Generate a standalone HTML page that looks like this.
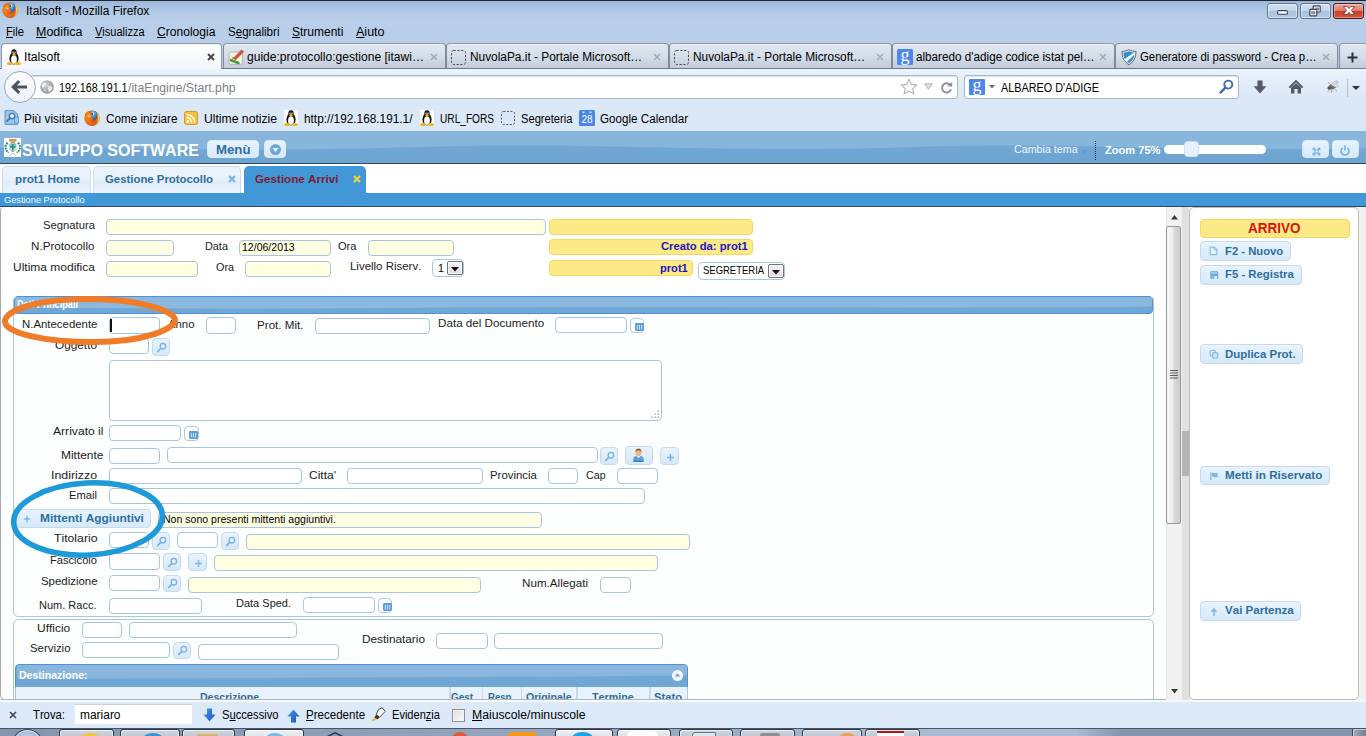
<!DOCTYPE html>
<html lang="it">
<head>
<meta charset="utf-8">
<title>Italsoft - Mozilla Firefox</title>
<style>
*{box-sizing:border-box;margin:0;padding:0}
html,body{width:1366px;height:736px;overflow:hidden;background:#dbe8f7;font-family:"Liberation Sans",sans-serif;font-size:12px;color:#000}
#root{position:relative;width:1366px;height:736px;overflow:hidden}
.t{position:absolute;white-space:nowrap;font-kerning:none;transform-origin:0 0}
.b{position:absolute}
.i{position:absolute;overflow:visible}
u{text-decoration:underline;text-underline-offset:1px}
/* browser chrome */
.titlebar{background:linear-gradient(#9bb6d8 0,#adc5e3 35%,#b7cde8 75%,#b9cfe9 100%);border-top:1px solid #23272d}
.menubar{background:#b9cfe9}
.tabstrip{background:#b9cfe9}
.tab{border:1px solid #7f8a9b;border-top-color:#8d99ac;border-bottom:none;border-radius:4px 4px 0 0;background:linear-gradient(#e1e8f2 0,#d4dde9 50%,#c2ccdb 100%);box-shadow:inset 0 1px 0 #eef2f8}
.tab.act{background:linear-gradient(#ffffff,#f2f6fb);border-color:#8d99ac}
.navbar{background:linear-gradient(#ecf4fd 0,#e6f0fb 18%,#dbe8f7 80%,#dbe8f7 100%)}
.navline{background:#6f7987}
.urlbox{background:#fff;border:1px solid #a9b6c9;border-radius:3px;box-shadow:inset 0 1px 1px #dde3ea}
.backbtn{background:linear-gradient(#fdfeff,#eef2f8);border:1px solid #9ba7b7;border-radius:50%}
.bookmarks{background:#dbe8f7}
.wbtn{border:1px solid #5f7493;border-radius:3px;background:linear-gradient(#d3e1f2 0,#c4d6ec 48%,#a9c0dd 52%,#b4c9e3 100%);box-shadow:inset 0 0 0 1px rgba(255,255,255,.5)}
.wbtn.close{border-color:#4a1c18;background:linear-gradient(#eba898 0,#dc7e6b 48%,#c53f29 52%,#d4573f 100%);box-shadow:inset 0 0 0 1px rgba(255,255,255,.35)}
/* app */
.apphead{background:linear-gradient(#73a8d4 0,#6fa6d3 60%,#6ca4d2 100%)}
.appline{background:#2f4560}
.white{background:#fff}
.atab{border:1px solid #c9ddee;border-bottom:none;border-radius:5px 5px 0 0;background:linear-gradient(#ebf4fc 0,#e7f2fb 45%,#e0edf9 58%,#e9f3fc 100%)}
.atab.act{background:#4297d7;border-color:#4297d7}
.bluebar{background:#4297d7}
.content{background:#fff}
.inp{background:#fff;border:1px solid #a7c6de;border-radius:4px}
.ro{background:#ffffe2}
.hl{background:#fbea85;border:1px solid #f3d663;border-radius:4px}
.panel{border:1px solid #a9c8df;border-radius:5px;background:#fdfefe}
.phead{border:1px solid #4f94d0;border-radius:4px;background:#70a7d4}
.btn{border:1px solid #c5dbec;border-radius:4px;background:linear-gradient(#e8f3fd 0,#dfeefb 50%,#d6e9f9 100%)}
.sel{background:#fff;border:1px solid #a6c9e2;border-radius:4px}
.selbtn{border:1px solid #70747a;border-radius:2px;background:linear-gradient(#f6f6f6,#dcdcdc);box-shadow:inset 0 0 0 1px #fff}
.findbar{background:#dbe9f8;border-top:2px solid #f7fafd}
.taskbar{background:linear-gradient(90deg,#8595ae 0,#8e9eb7 25%,#9aabc3 50%,#a9bbd2 68%,#a9bbd2 78.8%,#8595ae 82%,#8595ae 100%)}

</style>
</head>
<body>
<div id="root">
<!-- window title bar -->
<div class="b titlebar" style="left:0px;top:0px;width:1366px;height:22px;"></div>
<div class="b menubar" style="left:0px;top:22px;width:1366px;height:21px;"></div>
<div class="b tabstrip" style="left:0px;top:43px;width:1366px;height:26px;"></div>
<div class="b navline" style="left:0px;top:68px;width:1366px;height:1px;"></div>
<div class="b navbar" style="left:0px;top:69px;width:1366px;height:35px;"></div>
<div class="b bookmarks" style="left:0px;top:104px;width:1366px;height:27px;"></div>
<svg class="i" style="left:2px;top:2px;" width="16" height="16" viewBox="0 0 16 16"><defs><radialGradient id="ffga" cx="40%" cy="30%" r="75%"><stop offset="0" stop-color="#d9effc"/><stop offset=".35" stop-color="#4f9fe2"/><stop offset="1" stop-color="#1d4f9e"/></radialGradient>
<radialGradient id="ffoa" cx="35%" cy="45%" r="70%"><stop offset="0" stop-color="#f59a22"/><stop offset=".6" stop-color="#e7681a"/><stop offset="1" stop-color="#c24a10"/></radialGradient></defs>
<circle cx="8" cy="8.2" r="7.7" fill="url(#ffoa)"/>
<path d="M11.6 1.6 C14.4 3 16 5.6 15.7 8.6 C15.4 11.6 13.6 14 11 15.2 C13 13.4 14 11 13.8 8.4 C13.7 5.6 12.8 3.4 11.6 1.6Z" fill="#f8cb45"/>
<ellipse cx="9.9" cy="5.4" rx="3.5" ry="4.7" fill="url(#ffga)"/>
<path d="M.9 4.4 C1.6 2.4 3.6 .9 6 .9 C6.6 .9 7 1 7.4 1.2 C6.6 2 6.6 2.9 7.4 3.6 C8.2 3.9 8.6 4.6 8.4 5.5 C7.6 5.8 7.2 6.4 7.2 7.1 C7.9 7.4 8.4 8 8.4 8.8 C9.4 9.8 10.8 10 12 9.4 C11.4 11.2 9.6 12.2 7.6 11.9 C4.6 11.4 2.8 9.2 3 6.8 C1.8 6.4 1 5.6 .9 4.4Z" fill="url(#ffoa)"/>
<path d="M3.4 5.6 C4.6 5.2 6 5.6 6.8 6.6 C5.6 7.2 4.2 7 3.4 5.6Z" fill="#fbd9a0" opacity=".75"/>
<circle cx="8.3" cy="4" r=".8" fill="#1a1a1a"/></svg>
<span class="t" style="left:26.0px;top:4px;font-size:12px;line-height:14px;">Italsoft - Mozilla Firefox</span>
<div class="b wbtn" style="left:1267px;top:3px;width:31px;height:16px;"></div>
<div class="b wbtn" style="left:1300px;top:3px;width:31px;height:16px;"></div>
<div class="b wbtn close" style="left:1333px;top:3px;width:31px;height:16px;"></div>
<svg class="i" style="left:1277px;top:10px;" width="11" height="5" viewBox="0 0 11 5"><rect x=".6" y=".6" width="9.8" height="3.6" fill="#fff" stroke="#3c4656" stroke-width="1.1" rx="1"/></svg>
<svg class="i" style="left:1309px;top:5px;" width="12" height="12" viewBox="0 0 12 12"><rect x="4.2" y=".8" width="7" height="6.2" rx=".8" fill="#fff" stroke="#3c4656" stroke-width="1.2"/><rect x="7" y="3" width="2.4" height="1.8" fill="#c3d2e6" stroke="#3c4656" stroke-width=".7"/><rect x=".8" y="4.4" width="7" height="6.4" rx=".8" fill="#fff" stroke="#3c4656" stroke-width="1.2"/><rect x="2.8" y="6.8" width="3" height="2" fill="#c3d2e6" stroke="#3c4656" stroke-width=".7"/></svg>
<svg class="i" style="left:1343px;top:6px;" width="12" height="9" viewBox="0 0 12 9"><path d="M.4 .6 H4.4 L6 2.6 L7.6 .6 H11.6 L8.3 4.4 L11.6 8.4 H7.6 L6 6.3 L4.4 8.4 H.4 L3.7 4.4 Z" fill="#fff" stroke="#5a211a" stroke-width=".7" stroke-linejoin="round"/></svg>
<span class="t" style="left:6.0px;top:25px;font-size:12px;line-height:14px;transform:scaleX(0.932);"><u>F</u>ile</span>
<span class="t" style="left:36.0px;top:25px;font-size:12px;line-height:14px;transform:scaleX(1.039);"><u>M</u>odifica</span>
<span class="t" style="left:95.0px;top:25px;font-size:12px;line-height:14px;transform:scaleX(0.919);"><u>V</u>isualizza</span>
<span class="t" style="left:157.0px;top:25px;font-size:12px;line-height:14px;transform:scaleX(1.007);"><u>C</u>ronologia</span>
<span class="t" style="left:228.0px;top:25px;font-size:12px;line-height:14px;transform:scaleX(0.964);">S<u>e</u>gnalibri</span>
<span class="t" style="left:292.0px;top:25px;font-size:12px;line-height:14px;"><u>S</u>trumenti</span>
<span class="t" style="left:356.0px;top:25px;font-size:12px;line-height:14px;transform:scaleX(1.042);"><u>A</u>iuto</span>
<div class="b tab act" style="left:1px;top:43px;width:221px;height:26px;"></div>
<svg class="i" style="left:7px;top:49px;" width="14" height="16" viewBox="0 0 14 16"><ellipse cx="7" cy="9.5" rx="4.6" ry="6" fill="#141414"/><ellipse cx="7" cy="3.6" rx="2.7" ry="3.3" fill="#141414"/>
<ellipse cx="7" cy="10.6" rx="2.9" ry="4.3" fill="#fff"/><ellipse cx="7" cy="5.2" rx="1.5" ry="1.2" fill="#f3b51a"/>
<ellipse cx="3" cy="14.6" rx="3" ry="1.5" fill="#f0b41c"/><ellipse cx="11" cy="14.6" rx="3" ry="1.5" fill="#f0b41c"/>
<circle cx="6" cy="3.2" r=".7" fill="#fff"/><circle cx="8" cy="3.2" r=".7" fill="#fff"/></svg>
<span class="t" style="left:24.0px;top:50px;font-size:12px;line-height:14px;transform:scaleX(1.017);">Italsoft</span>
<svg class="i" style="left:206.5px;top:53px;" width="8" height="8" viewBox="0 0 8 8"><path d="M1 1 L7 7 M7 1 L1 7" stroke="#3f444c" stroke-width="1.9" fill="none"/></svg>
<div class="b tab" style="left:223px;top:43px;width:223px;height:25px;"></div>
<svg class="i" style="left:228px;top:49px;" width="16" height="16" viewBox="0 0 16 16"><rect x="1" y="3" width="13.6" height="12.4" rx="2.2" fill="#f4f3ec" stroke="#b7b9ac" stroke-width="1"/>
<path d="M3 11.2 L10.4 14" stroke="#3fa338" stroke-width="2.6" fill="none" stroke-linecap="round"/>
<path d="M4 8.6 L7 9.6" stroke="#6fc05a" stroke-width="1.4" fill="none"/>
<path d="M5.2 9.6 L13.6 1 L15.6 2.8 L7.4 11 L4.6 11.6Z" fill="#e0542a" stroke="#93321a" stroke-width=".6"/>
<path d="M5.2 9.6 L7.4 11 L4.6 11.6Z" fill="#f1d7b4"/></svg>
<span class="t" style="left:247.0px;top:50px;font-size:12px;line-height:14px;transform:scaleX(1.005);">guide:protocollo:gestione [itawi…</span>
<svg class="i" style="left:429.5px;top:53px;" width="8" height="8" viewBox="0 0 8 8"><path d="M1 1 L7 7 M7 1 L1 7" stroke="#a3aab5" stroke-width="1.5" fill="none"/></svg>
<div class="b tab" style="left:446px;top:43px;width:223px;height:25px;"></div>
<svg class="i" style="left:450.5px;top:49.5px;" width="15" height="15" viewBox="0 0 15 15"><rect x=".5" y=".5" width="14" height="14" rx="2" fill="none" stroke="#4a4f57" stroke-width="1" stroke-dasharray="2.2 1.6"/></svg>
<span class="t" style="left:470.0px;top:50px;font-size:12px;line-height:14px;transform:scaleX(0.989);">NuvolaPa.it - Portale Microsoft…</span>
<svg class="i" style="left:652.5px;top:53px;" width="8" height="8" viewBox="0 0 8 8"><path d="M1 1 L7 7 M7 1 L1 7" stroke="#a3aab5" stroke-width="1.5" fill="none"/></svg>
<div class="b tab" style="left:669px;top:43px;width:223px;height:25px;"></div>
<svg class="i" style="left:673.5px;top:49.5px;" width="15" height="15" viewBox="0 0 15 15"><rect x=".5" y=".5" width="14" height="14" rx="2" fill="none" stroke="#4a4f57" stroke-width="1" stroke-dasharray="2.2 1.6"/></svg>
<span class="t" style="left:693.0px;top:50px;font-size:12px;line-height:14px;transform:scaleX(0.989);">NuvolaPa.it - Portale Microsoft…</span>
<svg class="i" style="left:875.5px;top:53px;" width="8" height="8" viewBox="0 0 8 8"><path d="M1 1 L7 7 M7 1 L1 7" stroke="#a3aab5" stroke-width="1.5" fill="none"/></svg>
<div class="b tab" style="left:892px;top:43px;width:223px;height:25px;"></div>
<svg class="i" style="left:897px;top:49px;" width="16" height="16" viewBox="0 0 16 16"><rect width="16" height="16" rx="1.5" fill="#4c87ea"/><text x="8" y="11.6" text-anchor="middle" font-family="Liberation Serif,serif" font-size="18" fill="#fff">g</text></svg>
<span class="t" style="left:916.0px;top:50px;font-size:12px;line-height:14px;transform:scaleX(0.975);">albaredo d'adige codice istat pel…</span>
<svg class="i" style="left:1098.5px;top:53px;" width="8" height="8" viewBox="0 0 8 8"><path d="M1 1 L7 7 M7 1 L1 7" stroke="#a3aab5" stroke-width="1.5" fill="none"/></svg>
<div class="b tab" style="left:1115px;top:43px;width:223px;height:25px;"></div>
<svg class="i" style="left:1121px;top:49px;" width="16" height="16" viewBox="0 0 16 16"><path d="M8 .6 C10 1.8 12.6 2.4 15 2.4 C15 8 13 13 8 15.6 C3 13 1 8 1 2.4 C3.4 2.4 6 1.8 8 .6Z" fill="#e9eef3" stroke="#5c6670" stroke-width="1"/>
<path d="M8 2.2 C9.8 3.1 11.8 3.6 13.6 3.7 C13.5 8 12 11.8 8 14 C4 11.8 2.5 8 2.4 3.7 C4.2 3.6 6.2 3.1 8 2.2Z" fill="#2f8fd6"/>
<path d="M12.8 3.7 L3.2 10.2 C3.8 11.3 4.6 12.3 5.6 13 L13.5 5.6 C13.6 5 13.6 4.3 13.6 3.7Z" fill="#fff"/></svg>
<span class="t" style="left:1139.5px;top:50px;font-size:12px;line-height:14px;transform:scaleX(0.945);">Generatore di password - Crea p…</span>
<svg class="i" style="left:1321.5px;top:53px;" width="8" height="8" viewBox="0 0 8 8"><path d="M1 1 L7 7 M7 1 L1 7" stroke="#a3aab5" stroke-width="1.5" fill="none"/></svg>
<div class="b tab" style="left:1339px;top:43px;width:29px;height:25px;"></div>
<svg class="i" style="left:1346.5px;top:51.5px;" width="11" height="11" viewBox="0 0 11 11"><path d="M5.5 .5 V10.5 M.5 5.5 H10.5" stroke="#2c3038" stroke-width="2" fill="none"/></svg>
<div class="b urlbox" style="left:30px;top:75px;width:928px;height:24px;"></div>
<div class="b backbtn" style="left:4px;top:71px;width:32px;height:32px;"></div>
<svg class="i" style="left:12px;top:80px;" width="16" height="14" viewBox="0 0 16 14"><path d="M7.2 1.2 L1.2 7 L7.2 12.8 M1.6 7 H15" stroke="#4c545f" stroke-width="3" fill="none" stroke-linejoin="miter"/></svg>
<svg class="i" style="left:40px;top:80px;" width="14" height="14" viewBox="0 0 14 14"><defs><radialGradient id="glb" cx="40%" cy="35%" r="70%"><stop offset="0" stop-color="#d5d5d5"/><stop offset="1" stop-color="#8f8f8f"/></radialGradient></defs>
<circle cx="7" cy="7" r="6.8" fill="url(#glb)"/><path d="M3 3 C5 2 6.5 3 6 5 C5.5 7 3.5 6.6 2.4 7.8 C1.6 6 2 4 3 3Z M8.5 6.5 C10 5.6 12 6.4 12.4 8 C12 10 10.6 11.6 9 12 C8 10.6 7.4 8 8.5 6.5Z M4 9.6 C5 9.4 6 10.4 5.6 11.8 C4.8 11.4 4.2 10.6 4 9.6Z" fill="#ececec"/></svg>
<span class="t" style="left:58.5px;top:81px;font-size:12px;line-height:14px;transform:scaleX(0.893);">192.168.191.1</span>
<span class="t" style="left:127.5px;top:81px;font-size:12px;line-height:14px;color:#7b7f86;transform:scaleX(1.020);">/itaEngine/Start.php</span>
<svg class="i" style="left:900px;top:78px;" width="18" height="17" viewBox="0 0 18 17"><path d="M9 1.2 L11.3 6.3 L16.8 6.9 L12.7 10.6 L13.9 16 L9 13.2 L4.1 16 L5.3 10.6 L1.2 6.9 L6.7 6.3 Z" fill="#fbfbfb" stroke="#b4b8be" stroke-width="1.2" stroke-linejoin="round"/></svg>
<svg class="i" style="left:924px;top:83px;" width="9" height="7" viewBox="0 0 9 7"><path d="M.6 .8 H8.4 L4.5 6.4 Z" fill="#dcdfe3" stroke="#a9adb3" stroke-width=".9"/></svg>
<svg class="i" style="left:939.5px;top:80.5px;" width="13" height="13" viewBox="0 0 13 13"><path d="M10.4 4.2 A4.6 4.6 0 1 0 11 8.4" stroke="#8b9199" stroke-width="1.9" fill="none"/><path d="M7.4 5.4 H12.2 V.8 Z" fill="#8b9199"/></svg>
<div class="b urlbox" style="left:964px;top:75px;width:275px;height:24px;"></div>
<svg class="i" style="left:969px;top:79px;" width="16" height="16" viewBox="0 0 16 16"><rect width="16" height="16" rx="1" fill="#4c87ea"/><text x="8" y="11.6" text-anchor="middle" font-family="Liberation Serif,serif" font-size="18" fill="#fff">g</text></svg>
<svg class="i" style="left:989px;top:85px;" width="6" height="4" viewBox="0 0 6 4"><path d="M0 0 H6 L3 3.6 Z" fill="#6a6f78"/></svg>
<span class="t" style="left:1001.0px;top:81px;font-size:12px;line-height:14px;transform:scaleX(0.904);">ALBAREO D'ADIGE</span>
<svg class="i" style="left:1219px;top:79px;" width="15" height="15" viewBox="0 0 15 15"><circle cx="9.3" cy="5.6" r="4" fill="none" stroke="#3f6fa8" stroke-width="1.9"/><path d="M6.4 8.6 L1.4 13.6" stroke="#3f6fa8" stroke-width="2.4" stroke-linecap="round"/></svg>
<svg class="i" style="left:1253px;top:80px;" width="14" height="14" viewBox="0 0 14 14"><path d="M4.4 .5 H9.6 V6.2 H13.4 L7 13.4 L.6 6.2 H4.4 Z" fill="#545b66"/></svg>
<svg class="i" style="left:1288px;top:79px;" width="16" height="15" viewBox="0 0 16 15"><path d="M8 .8 L15.4 8 L14 9.3 L8 3.6 L2 9.3 L.6 8 Z" fill="#545b66"/><path d="M3 8.6 L8 4.2 L13 8.6 V14.6 H9.6 V10 H6.4 V14.6 H3 Z" fill="#545b66"/></svg>
<svg class="i" style="left:1324px;top:79px;" width="17" height="15" viewBox="0 0 17 15"><ellipse cx="8.6" cy="7.4" rx="4" ry="2.8" fill="#6b6e73" transform="rotate(-25 8.6 7.4)"/><circle cx="5.2" cy="9" r="1.8" fill="#505256"/><ellipse cx="10.8" cy="4.2" rx="3.8" ry="1.7" fill="#d3d6da" stroke="#aeb1b6" stroke-width=".5" transform="rotate(-30 10.8 4.2)"/><ellipse cx="12" cy="6.8" rx="3" ry="1.3" fill="#dfe1e4" stroke="#b6b9be" stroke-width=".4" transform="rotate(10 12 6.8)"/><path d="M6 10.4 L3.4 13 M8 11 L7.2 13.8 M10.6 10 L13 12.2 M6.4 5.4 L4 3" stroke="#8f9297" stroke-width=".8"/></svg>
<div class="b" style="left:1347px;top:79px;width:1px;height:18px;background:#b4bdcb"></div>
<svg class="i" style="left:1352px;top:86px;" width="8" height="4" viewBox="0 0 8 4"><path d="M0 0 H8 L4 4 Z" fill="#30343a"/></svg>
<svg class="i" style="left:4px;top:110px;" width="15" height="15" viewBox="0 0 15 15"><path d="M1 .6 H9.6 L13.6 4 V14.4 H1 Z" fill="#9cc7ea" stroke="#5d93c4" stroke-width="1"/><rect x="10.5" y="7" width="4" height="6" fill="#9cc7ea" stroke="#5d93c4" stroke-width=".8"/>
<circle cx="8" cy="6" r="2.7" fill="#e6f2fc" stroke="#3f76ad" stroke-width="1.3"/><path d="M6 8 L3 11.2" stroke="#3f76ad" stroke-width="1.7" stroke-linecap="round"/></svg>
<span class="t" style="left:24.0px;top:112px;font-size:12px;line-height:14px;transform:scaleX(0.991);">Più visitati</span>
<svg class="i" style="left:84px;top:110px;" width="16" height="16" viewBox="0 0 16 16"><defs><radialGradient id="ffgb" cx="40%" cy="30%" r="75%"><stop offset="0" stop-color="#d9effc"/><stop offset=".35" stop-color="#4f9fe2"/><stop offset="1" stop-color="#1d4f9e"/></radialGradient>
<radialGradient id="ffob" cx="35%" cy="45%" r="70%"><stop offset="0" stop-color="#f59a22"/><stop offset=".6" stop-color="#e7681a"/><stop offset="1" stop-color="#c24a10"/></radialGradient></defs>
<circle cx="8" cy="8.2" r="7.7" fill="url(#ffob)"/>
<path d="M11.6 1.6 C14.4 3 16 5.6 15.7 8.6 C15.4 11.6 13.6 14 11 15.2 C13 13.4 14 11 13.8 8.4 C13.7 5.6 12.8 3.4 11.6 1.6Z" fill="#f8cb45"/>
<ellipse cx="9.9" cy="5.4" rx="3.5" ry="4.7" fill="url(#ffgb)"/>
<path d="M.9 4.4 C1.6 2.4 3.6 .9 6 .9 C6.6 .9 7 1 7.4 1.2 C6.6 2 6.6 2.9 7.4 3.6 C8.2 3.9 8.6 4.6 8.4 5.5 C7.6 5.8 7.2 6.4 7.2 7.1 C7.9 7.4 8.4 8 8.4 8.8 C9.4 9.8 10.8 10 12 9.4 C11.4 11.2 9.6 12.2 7.6 11.9 C4.6 11.4 2.8 9.2 3 6.8 C1.8 6.4 1 5.6 .9 4.4Z" fill="url(#ffob)"/>
<path d="M3.4 5.6 C4.6 5.2 6 5.6 6.8 6.6 C5.6 7.2 4.2 7 3.4 5.6Z" fill="#fbd9a0" opacity=".75"/>
<circle cx="8.3" cy="4" r=".8" fill="#1a1a1a"/></svg>
<span class="t" style="left:105.5px;top:112px;font-size:12px;line-height:14px;transform:scaleX(0.975);">Come iniziare</span>
<svg class="i" style="left:184px;top:111px;" width="14" height="14" viewBox="0 0 14 14"><rect x=".5" y=".5" width="13" height="13" rx="2" fill="#f4c343" stroke="#d99a1c" stroke-width="1"/>
<circle cx="3.8" cy="10.4" r="1.4" fill="#fff"/><path d="M2.6 6.6 A4.8 4.8 0 0 1 7.4 11.4 M2.6 3.4 A8 8 0 0 1 10.6 11.4" stroke="#fff" stroke-width="1.5" fill="none"/></svg>
<span class="t" style="left:204.0px;top:112px;font-size:12px;line-height:14px;transform:scaleX(1.014);">Ultime notizie</span>
<svg class="i" style="left:284px;top:110px;background:#fff" width="14" height="16" viewBox="0 0 14 16"><ellipse cx="7" cy="9.5" rx="4.6" ry="6" fill="#141414"/><ellipse cx="7" cy="3.6" rx="2.7" ry="3.3" fill="#141414"/>
<ellipse cx="7" cy="10.6" rx="2.9" ry="4.3" fill="#fff"/><ellipse cx="7" cy="5.2" rx="1.5" ry="1.2" fill="#f3b51a"/>
<ellipse cx="3" cy="14.6" rx="3" ry="1.5" fill="#f0b41c"/><ellipse cx="11" cy="14.6" rx="3" ry="1.5" fill="#f0b41c"/>
<circle cx="6" cy="3.2" r=".7" fill="#fff"/><circle cx="8" cy="3.2" r=".7" fill="#fff"/></svg>
<span class="t" style="left:304.0px;top:112px;font-size:12px;line-height:14px;transform:scaleX(0.985);">http://192.168.191.1/</span>
<svg class="i" style="left:420px;top:110px;background:#fff" width="14" height="16" viewBox="0 0 14 16"><ellipse cx="7" cy="9.5" rx="4.6" ry="6" fill="#141414"/><ellipse cx="7" cy="3.6" rx="2.7" ry="3.3" fill="#141414"/>
<ellipse cx="7" cy="10.6" rx="2.9" ry="4.3" fill="#fff"/><ellipse cx="7" cy="5.2" rx="1.5" ry="1.2" fill="#f3b51a"/>
<ellipse cx="3" cy="14.6" rx="3" ry="1.5" fill="#f0b41c"/><ellipse cx="11" cy="14.6" rx="3" ry="1.5" fill="#f0b41c"/>
<circle cx="6" cy="3.2" r=".7" fill="#fff"/><circle cx="8" cy="3.2" r=".7" fill="#fff"/></svg>
<span class="t" style="left:440.0px;top:112px;font-size:12px;line-height:14px;transform:scaleX(0.844);">URL_FORS</span>
<svg class="i" style="left:500.5px;top:111px;" width="14" height="14" viewBox="0 0 15 15"><rect x=".5" y=".5" width="14" height="14" rx="2" fill="none" stroke="#4a4f57" stroke-width="1" stroke-dasharray="2.2 1.6"/></svg>
<span class="t" style="left:521.0px;top:112px;font-size:12px;line-height:14px;transform:scaleX(0.929);">Segreteria</span>
<svg class="i" style="left:579px;top:110px;" width="16" height="16" viewBox="0 0 16 16"><rect width="16" height="16" rx="1.5" fill="#4a86e8"/><rect x="3.5" y="1.5" width="2" height="1.6" fill="#dbe7fb"/><rect x="10.5" y="1.5" width="2" height="1.6" fill="#dbe7fb"/><text x="8" y="13.2" text-anchor="middle" font-family="Liberation Sans,sans-serif" font-size="10" fill="#fff">28</text></svg>
<span class="t" style="left:600.0px;top:112px;font-size:12px;line-height:14px;transform:scaleX(0.970);">Google Calendar</span>
<!-- application header -->
<div class="b apphead" style="left:0px;top:131px;width:1366px;height:32px;"></div>
<svg class="i" style="left:0px;top:131px;" width="1366" height="32" viewBox="0 0 1366 32"><path d="M0 0 H1366 V17.5 C1290 19 1200 18 1120 16 C1020 13.6 960 14.4 900 16.4 C800 19.4 700 17.6 620 15.6 C520 13.4 460 14.6 400 16.6 C300 19.6 200 19 120 17 C80 16 40 16 0 17 Z" fill="#88b5db"/></svg>
<div class="b appline" style="left:0px;top:163px;width:1366px;height:1px;"></div>
<div class="b white" style="left:0px;top:164px;width:1366px;height:29px;"></div>
<svg class="i" style="left:4px;top:138px;" width="17" height="19" viewBox="0 0 17 19"><rect width="17" height="19" fill="#fefefe"/>
<path d="M5 1.2 H12.6 L12 3.6 H5.6 Z" fill="#a67a2c"/><path d="M5.6 2.2 H12 V2.9 H5.6Z" fill="#d6b354"/>
<rect x="6.6" y="3.8" width="4.4" height="1.8" fill="#c59a72"/>
<path d="M5.2 5.4 H12.4 V11 C12.4 12.4 10.6 13.4 8.8 13.8 C7 13.4 5.2 12.4 5.2 11 Z" fill="#7cc3e8"/>
<path d="M5.2 9 H12.4 V11 C12.4 12.4 10.6 13.4 8.8 13.8 C7 13.4 5.2 12.4 5.2 11 Z" fill="#aee6f4"/>
<path d="M8 6 H9.6 V8.2 H11.6 V9.8 H9.6 V12 H8 V9.8 H6 V8.2 H8 Z" fill="#2f8f62"/>
<path d="M7.6 12.6 H10 V13.4 H7.6Z" fill="#c0563a"/>
<path d="M3.6 4.8 C.8 7.4 .8 11.6 4.6 14.8" fill="none" stroke="#2c8a58" stroke-width="2" stroke-dasharray="1.8 .9"/>
<path d="M14 4.8 C16.8 7.4 16.8 11.6 12.8 14.8" fill="none" stroke="#2c8a58" stroke-width="2" stroke-dasharray="1.8 .9"/>
<path d="M5.6 18 L8.7 14.8 L11.8 18" fill="none" stroke="#a9bfa6" stroke-width="1"/></svg>
<span class="t" style="left:22.0px;top:142px;font-size:16px;line-height:17px;font-weight:bold;color:#fff;">SVILUPPO SOFTWARE</span>
<div class="b btn" style="left:207px;top:140px;width:52px;height:18px;border-color:#dcebf8;border-radius:4px"></div>
<span class="t" style="left:216.0px;top:143px;font-size:12.2px;line-height:14px;font-weight:bold;color:#2e6e9e;transform:scaleX(1.083);">Menù</span>
<div class="b btn" style="left:264px;top:140px;width:22px;height:18px;border-color:#dcebf8;border-radius:4px"></div>
<svg class="i" style="left:270px;top:143.5px;" width="11" height="11" viewBox="0 0 11 11"><circle cx="5.5" cy="5.5" r="5.5" fill="#6aa9de"/><path d="M2.6 4 H8.4 L5.5 8 Z" fill="#fff"/></svg>
<span class="t" style="left:1014.0px;top:143px;font-size:10.8px;line-height:12px;color:#f1f7fd;transform:scaleX(0.991);">Cambia tema</span>
<svg class="i" style="left:1081px;top:150px;" width="7" height="5" viewBox="0 0 7 5"><path d="M0 0 H7 L3.5 4.4 Z" fill="#5c9fe0"/></svg>
<div class="b" style="left:1095px;top:141px;width:1px;height:19px;border-left:1px dotted #27384c"></div>
<span class="t" style="left:1105.3px;top:144px;font-size:11.4px;line-height:12px;font-weight:bold;color:#fff;transform:scaleX(0.974);">Zoom 75%</span>
<div class="b" style="left:1164px;top:145px;width:102px;height:9px;background:#fdfeff;border-radius:4.5px"></div>
<div class="b" style="left:1184px;top:141px;width:15px;height:16px;background:#e6f1fc;border:1px solid #cfe2f4;border-radius:4px"></div>
<div class="b btn" style="left:1302px;top:140px;width:27px;height:18px;border-color:#dcebf8"></div>
<div class="b btn" style="left:1332px;top:140px;width:27px;height:18px;border-color:#dcebf8"></div>
<svg class="i" style="left:1311.5px;top:146.5px;" width="9" height="9" viewBox="0 0 9 9"><path d="M.6 .6 H3.2 V3.2 H.6Z M5.8 .6 H8.4 V3.2 H5.8Z M.6 5.8 H3.2 V8.4 H.6Z M5.8 5.8 H8.4 V8.4 H5.8Z M2.2 2.2 H6.8 V6.8 H2.2Z" fill="#7db6e6"/><rect x="3.4" y="3.4" width="2.2" height="2.2" fill="#e4f0fb"/></svg>
<svg class="i" style="left:1340px;top:144.5px;" width="10" height="11" viewBox="0 0 10 11"><path d="M2.6 2.8 A4 4 0 1 0 7.4 2.8" fill="none" stroke="#74b0e2" stroke-width="1.6"/><path d="M5 .6 V5.4" stroke="#74b0e2" stroke-width="1.6"/></svg>
<div class="b atab" style="left:2px;top:166px;width:89px;height:27px;"></div>
<div class="b atab" style="left:93px;top:166px;width:148px;height:27px;"></div>
<div class="b atab act" style="left:244px;top:166px;width:122px;height:27px;"></div>
<span class="t" style="left:14.5px;top:173px;font-size:10.5px;line-height:12px;font-weight:bold;color:#2e6e9e;transform:scaleX(1.113);">prot1 Home</span>
<span class="t" style="left:105.0px;top:173px;font-size:10.5px;line-height:12px;font-weight:bold;color:#2e6e9e;transform:scaleX(1.083);">Gestione Protocollo</span>
<span class="t" style="left:255.0px;top:173px;font-size:10.5px;line-height:12px;font-weight:bold;color:#7d1c30;transform:scaleX(1.109);">Gestione Arrivi</span>
<svg class="i" style="left:228px;top:175px;" width="8" height="8" viewBox="0 0 8 8"><path d="M1 1 L7 7 M7 1 L1 7" stroke="#7fb5e3" stroke-width="2.3" fill="none"/></svg>
<svg class="i" style="left:352.5px;top:175px;" width="8" height="8" viewBox="0 0 8 8"><path d="M1 1 L7 7 M7 1 L1 7" stroke="#f0d23a" stroke-width="2.3" fill="none"/></svg>
<div class="b bluebar" style="left:0px;top:193px;width:1366px;height:13px;"></div>
<div class="b appline" style="left:0px;top:206px;width:1366px;height:1px;"></div>
<span class="t" style="left:4.0px;top:194px;font-size:9.4px;line-height:11px;color:#f4fdff;transform:scaleX(0.987);">Gestione Protocollo</span>
<div class="b" style="left:0px;top:207px;width:1366px;height:493px;background:#f0f0f0"></div>
<div class="b content" style="left:0px;top:207px;width:1166px;height:493px;border-left:1px solid #ababab;border-bottom:1px solid #b9b9b9;border-radius:4px 0 0 5px"></div>
<!-- form -->
<span class="t" style="left:42.5px;top:219px;font-size:11px;line-height:12px;color:#1c1c1c;transform:scaleX(1.023);">Segnatura</span>
<div class="b inp ro" style="left:106px;top:219px;width:440px;height:16px;"></div>
<div class="b hl" style="left:549px;top:219px;width:204px;height:16px;"></div>
<span class="t" style="left:31.0px;top:240px;font-size:11px;line-height:12px;color:#1c1c1c;transform:scaleX(1.059);">N.Protocollo</span>
<div class="b inp ro" style="left:106px;top:240px;width:68px;height:16px;"></div>
<span class="t" style="left:204.5px;top:240px;font-size:11px;line-height:12px;color:#1c1c1c;transform:scaleX(0.986);">Data</span>
<div class="b inp ro" style="left:239px;top:240px;width:92px;height:16px;"></div>
<span class="t" style="left:242.2px;top:241px;font-size:10.67px;line-height:12px;transform:scaleX(0.988);">12/06/2013</span>
<span class="t" style="left:338.0px;top:240px;font-size:11px;line-height:12px;color:#1c1c1c;transform:scaleX(1.007);">Ora</span>
<div class="b inp ro" style="left:368px;top:240px;width:86px;height:16px;"></div>
<div class="b hl" style="left:549px;top:239px;width:204px;height:16px;"></div>
<span class="t" style="left:661.3px;top:240px;font-size:11px;line-height:12px;font-weight:bold;color:#2415c6;transform:scaleX(1.021);">Creato da: prot1</span>
<span class="t" style="left:12.5px;top:261px;font-size:11px;line-height:12px;color:#1c1c1c;transform:scaleX(1.090);">Ultima modifica</span>
<div class="b inp ro" style="left:106px;top:261px;width:92px;height:16px;"></div>
<span class="t" style="left:215.5px;top:261px;font-size:11px;line-height:12px;color:#1c1c1c;transform:scaleX(0.980);">Ora</span>
<div class="b inp ro" style="left:245px;top:261px;width:86px;height:16px;"></div>
<span class="t" style="left:349.5px;top:260px;font-size:11px;line-height:12px;color:#1c1c1c;transform:scaleX(1.042);">Livello Riserv.</span>
<div class="b sel" style="left:432px;top:259px;width:32px;height:18px;"></div>
<span class="t" style="left:438.0px;top:262px;font-size:10.67px;line-height:12px;">1</span>
<div class="b selbtn" style="left:447px;top:261px;width:16px;height:14px;"></div>
<svg class="i" style="left:451px;top:266.5px;" width="8" height="5" viewBox="0 0 8 5"><path d="M0 0 H8 L4 4.6 Z" fill="#111"/></svg>
<div class="b hl" style="left:549px;top:260px;width:144px;height:16px;"></div>
<span class="t" style="left:660.4px;top:262px;font-size:11px;line-height:12px;font-weight:bold;color:#2415c6;transform:scaleX(1.011);">prot1</span>
<div class="b sel" style="left:698px;top:262px;width:87px;height:18px;"></div>
<span class="t" style="left:703.0px;top:264px;font-size:10.6px;line-height:12px;transform:scaleX(0.895);">SEGRETERIA</span>
<div class="b selbtn" style="left:768px;top:264px;width:16px;height:14px;"></div>
<svg class="i" style="left:772px;top:269.5px;" width="8" height="5" viewBox="0 0 8 5"><path d="M0 0 H8 L4 4.6 Z" fill="#111"/></svg>
<div class="b panel" style="left:13px;top:296px;width:1141px;height:321px;"></div>
<div class="b phead" style="left:14px;top:296px;width:1139px;height:18px;"></div>
<svg class="i" style="left:15px;top:297px;" width="1137" height="16" viewBox="0 0 1137 16"><path d="M0 0 H1137 V9.5 C900 12.5 700 8.5 450 10.5 C300 11.6 150 12 0 10.5 Z" fill="#8ab8df"/></svg>
<span class="t" style="left:17.0px;top:299px;font-size:10px;line-height:11px;font-weight:bold;color:#fff;transform:scaleX(0.915);">Dati Principali</span>
<span class="t" style="left:21.5px;top:318px;font-size:11px;line-height:12px;color:#1c1c1c;transform:scaleX(1.037);">N.Antecedente</span>
<div class="b inp" style="left:109px;top:317px;width:51px;height:17px;"></div>
<div class="b" style="left:110px;top:319px;width:2px;height:13px;background:#111"></div>
<span class="t" style="left:168.0px;top:318px;font-size:11px;line-height:12px;color:#1c1c1c;transform:scaleX(1.030);">Anno</span>
<div class="b inp" style="left:206px;top:317px;width:30px;height:17px;"></div>
<span class="t" style="left:257.0px;top:319px;font-size:11px;line-height:12px;color:#1c1c1c;transform:scaleX(1.057);">Prot. Mit.</span>
<div class="b inp" style="left:315px;top:318px;width:115px;height:16px;"></div>
<span class="t" style="left:437.5px;top:317px;font-size:11px;line-height:12px;color:#1c1c1c;transform:scaleX(1.059);">Data del Documento</span>
<div class="b inp" style="left:555px;top:317px;width:72px;height:16px;"></div>
<div class="b inp" style="left:630px;top:318px;width:14px;height:15px;border-color:#b9c6d6;border-radius:4px"></div>
<svg class="i" style="left:634.6px;top:323px;" width="9" height="8" viewBox="0 0 9 8"><rect x="0" y="0" width="9" height="8" rx="1.2" fill="#5a9edb"/><path d="M2.3 2 V6.4 M4.5 2 V6.4 M6.7 2 V6.4" stroke="#cfe6fa" stroke-width="1"/></svg>
<span class="t" style="left:55.0px;top:339px;font-size:11px;line-height:12px;color:#1c1c1c;transform:scaleX(1.073);">Oggetto</span>
<div class="b inp" style="left:109px;top:338px;width:40px;height:16px;"></div>
<div class="b btn" style="left:152px;top:338px;width:18px;height:18px;"></div>
<svg class="i" style="left:155.5px;top:341.5px;" width="11" height="11" viewBox="0 0 11 11"><circle cx="6.9" cy="4.2" r="2.7" fill="#f1f7fd" stroke="#7db6e6" stroke-width="1.5"/><path d="M4.8 6.4 L1.8 9.4" stroke="#7db6e6" stroke-width="1.9" stroke-linecap="round"/></svg>
<div class="b inp" style="left:109px;top:360px;width:553px;height:61px;"></div>
<svg class="i" style="left:651px;top:410px;" width="9" height="9" viewBox="0 0 9 9"><g fill="#b7b7b7"><rect x="6.4" y=".4" width="1.6" height="1.6"/><rect x="3.4" y="3.4" width="1.6" height="1.6"/><rect x="6.4" y="3.4" width="1.6" height="1.6"/><rect x=".4" y="6.4" width="1.6" height="1.6"/><rect x="3.4" y="6.4" width="1.6" height="1.6"/><rect x="6.4" y="6.4" width="1.6" height="1.6"/></g></svg>
<span class="t" style="left:53.0px;top:425px;font-size:11px;line-height:12px;color:#1c1c1c;transform:scaleX(1.101);">Arrivato il</span>
<div class="b inp" style="left:109px;top:425px;width:72px;height:16px;"></div>
<div class="b inp" style="left:184px;top:426px;width:15px;height:15px;border-color:#b9c6d6;border-radius:4px"></div>
<svg class="i" style="left:189.1px;top:431px;" width="9" height="8" viewBox="0 0 9 8"><rect x="0" y="0" width="9" height="8" rx="1.2" fill="#5a9edb"/><path d="M2.3 2 V6.4 M4.5 2 V6.4 M6.7 2 V6.4" stroke="#cfe6fa" stroke-width="1"/></svg>
<span class="t" style="left:61.0px;top:449px;font-size:11px;line-height:12px;color:#1c1c1c;transform:scaleX(1.085);">Mittente</span>
<div class="b inp" style="left:109px;top:448px;width:51px;height:16px;"></div>
<div class="b inp" style="left:167px;top:447px;width:431px;height:16px;"></div>
<div class="b btn" style="left:600px;top:447px;width:18px;height:18px;"></div>
<svg class="i" style="left:603.5px;top:450.5px;" width="11" height="11" viewBox="0 0 11 11"><circle cx="6.9" cy="4.2" r="2.7" fill="#f1f7fd" stroke="#7db6e6" stroke-width="1.5"/><path d="M4.8 6.4 L1.8 9.4" stroke="#7db6e6" stroke-width="1.9" stroke-linecap="round"/></svg>
<div class="b btn" style="left:625px;top:446px;width:28px;height:19px;"></div>
<svg class="i" style="left:631.5px;top:447.5px;" width="13" height="15" viewBox="0 0 13 15"><ellipse cx="6.5" cy="4.6" rx="3" ry="3.6" fill="#e9b98a"/><path d="M3.4 4.2 C3.2 1.6 4.8 .4 6.5 .4 C8.2 .4 9.8 1.6 9.6 4.2 C8.8 3 7.6 2.6 6.5 2.6 C5.4 2.6 4.2 3 3.4 4.2Z" fill="#9a5a1e"/>
<path d="M1.4 14 V10.6 C1.4 9 3 8.2 4.6 8 L6.5 9.8 L8.4 8 C10 8.2 11.6 9 11.6 10.6 V14 Z" fill="#5f9fdc"/><path d="M4.6 8 L6.5 9.8 L8.4 8 L6.5 8.6Z" fill="#fff"/><path d="M1.4 12.6 H11.6 V14 H1.4Z" fill="#3d7fc2"/></svg>
<div class="b btn" style="left:660px;top:447px;width:19px;height:18px;"></div>
<svg class="i" style="left:665.5px;top:453.2px;" width="9" height="9" viewBox="0 0 9 9"><path d="M4.5 1 V8 M1 4.5 H8" stroke="#7db6e6" stroke-width="1.5" fill="none"/></svg>
<span class="t" style="left:51.0px;top:469px;font-size:11px;line-height:12px;color:#1c1c1c;transform:scaleX(1.124);">Indirizzo</span>
<div class="b inp" style="left:109px;top:468px;width:193px;height:16px;"></div>
<span class="t" style="left:309.0px;top:469px;font-size:11px;line-height:12px;color:#1c1c1c;transform:scaleX(1.091);">Citta'</span>
<div class="b inp" style="left:347px;top:468px;width:136px;height:16px;"></div>
<span class="t" style="left:490.0px;top:469px;font-size:11px;line-height:12px;color:#1c1c1c;transform:scaleX(1.037);">Provincia</span>
<div class="b inp" style="left:548px;top:468px;width:30px;height:16px;"></div>
<span class="t" style="left:585.5px;top:469px;font-size:11px;line-height:12px;color:#1c1c1c;transform:scaleX(0.969);">Cap</span>
<div class="b inp" style="left:617px;top:468px;width:41px;height:16px;"></div>
<span class="t" style="left:69.0px;top:489px;font-size:11px;line-height:12px;color:#1c1c1c;transform:scaleX(1.018);">Email</span>
<div class="b inp" style="left:109px;top:488px;width:536px;height:16px;"></div>
<div class="b btn" style="left:16px;top:509px;width:135px;height:19px;"></div>
<svg class="i" style="left:23px;top:514.5px;" width="8" height="8" viewBox="0 0 8 8"><path d="M4 .8 V7.2 M.8 4 H7.2" stroke="#7db6e6" stroke-width="1.4" fill="none"/></svg>
<span class="t" style="left:39.5px;top:512px;font-size:11.2px;line-height:12px;font-weight:bold;color:#2e6e9e;transform:scaleX(1.065);">Mittenti Aggiuntivi</span>
<div class="b inp ro" style="left:158px;top:512px;width:384px;height:16px;"></div>
<span class="t" style="left:163.0px;top:513px;font-size:10.67px;line-height:12px;transform:scaleX(0.989);">Non sono presenti mittenti aggiuntivi.</span>
<span class="t" style="left:54.0px;top:532px;font-size:11px;line-height:12px;color:#1c1c1c;transform:scaleX(1.111);">Titolario</span>
<div class="b inp" style="left:109px;top:532px;width:40px;height:16px;"></div>
<div class="b btn" style="left:152px;top:532px;width:18px;height:18px;"></div>
<svg class="i" style="left:155.5px;top:535.5px;" width="11" height="11" viewBox="0 0 11 11"><circle cx="6.9" cy="4.2" r="2.7" fill="#f1f7fd" stroke="#7db6e6" stroke-width="1.5"/><path d="M4.8 6.4 L1.8 9.4" stroke="#7db6e6" stroke-width="1.9" stroke-linecap="round"/></svg>
<div class="b inp" style="left:177px;top:532px;width:41px;height:16px;"></div>
<div class="b btn" style="left:221px;top:532px;width:18px;height:18px;"></div>
<svg class="i" style="left:224.5px;top:535.5px;" width="11" height="11" viewBox="0 0 11 11"><circle cx="6.9" cy="4.2" r="2.7" fill="#f1f7fd" stroke="#7db6e6" stroke-width="1.5"/><path d="M4.8 6.4 L1.8 9.4" stroke="#7db6e6" stroke-width="1.9" stroke-linecap="round"/></svg>
<div class="b inp ro" style="left:246px;top:534px;width:444px;height:16px;"></div>
<span class="t" style="left:50.0px;top:554px;font-size:11px;line-height:12px;color:#1c1c1c;transform:scaleX(1.012);">Fascicolo</span>
<div class="b inp" style="left:109px;top:553px;width:51px;height:17px;"></div>
<div class="b btn" style="left:163px;top:553px;width:18px;height:18px;"></div>
<svg class="i" style="left:166.5px;top:556.5px;" width="11" height="11" viewBox="0 0 11 11"><circle cx="6.9" cy="4.2" r="2.7" fill="#f1f7fd" stroke="#7db6e6" stroke-width="1.5"/><path d="M4.8 6.4 L1.8 9.4" stroke="#7db6e6" stroke-width="1.9" stroke-linecap="round"/></svg>
<div class="b btn" style="left:188px;top:553px;width:19px;height:18px;"></div>
<svg class="i" style="left:193.5px;top:558.95px;" width="9" height="9" viewBox="0 0 9 9"><path d="M4.5 1 V8 M1 4.5 H8" stroke="#7db6e6" stroke-width="1.5" fill="none"/></svg>
<div class="b inp ro" style="left:214px;top:555px;width:444px;height:16px;"></div>
<span class="t" style="left:40.5px;top:575px;font-size:11px;line-height:12px;color:#1c1c1c;transform:scaleX(1.038);">Spedizione</span>
<div class="b inp" style="left:109px;top:575px;width:51px;height:16px;"></div>
<div class="b btn" style="left:163px;top:575px;width:18px;height:17px;"></div>
<svg class="i" style="left:166.5px;top:578px;" width="11" height="11" viewBox="0 0 11 11"><circle cx="6.9" cy="4.2" r="2.7" fill="#f1f7fd" stroke="#7db6e6" stroke-width="1.5"/><path d="M4.8 6.4 L1.8 9.4" stroke="#7db6e6" stroke-width="1.9" stroke-linecap="round"/></svg>
<div class="b inp ro" style="left:188px;top:577px;width:293px;height:16px;"></div>
<span class="t" style="left:522.0px;top:577px;font-size:11px;line-height:12px;color:#1c1c1c;transform:scaleX(1.058);">Num.Allegati</span>
<div class="b inp" style="left:600px;top:577px;width:31px;height:16px;"></div>
<span class="t" style="left:39.0px;top:599px;font-size:11px;line-height:12px;color:#1c1c1c;">Num. Racc.</span>
<div class="b inp" style="left:109px;top:598px;width:93px;height:16px;"></div>
<span class="t" style="left:236.0px;top:597px;font-size:11px;line-height:12px;color:#1c1c1c;">Data Sped.</span>
<div class="b inp" style="left:303px;top:597px;width:72px;height:16px;"></div>
<div class="b inp" style="left:378px;top:598px;width:14px;height:15px;border-color:#b9c6d6;border-radius:4px"></div>
<svg class="i" style="left:382.6px;top:603px;" width="9" height="8" viewBox="0 0 9 8"><rect x="0" y="0" width="9" height="8" rx="1.2" fill="#5a9edb"/><path d="M2.3 2 V6.4 M4.5 2 V6.4 M6.7 2 V6.4" stroke="#cfe6fa" stroke-width="1"/></svg>
<div class="b panel" style="left:13px;top:619px;width:1141px;height:101px;"></div>
<span class="t" style="left:37.0px;top:622px;font-size:11px;line-height:12px;color:#1c1c1c;transform:scaleX(1.087);">Ufficio</span>
<div class="b inp" style="left:82px;top:622px;width:40px;height:16px;"></div>
<div class="b inp" style="left:129px;top:622px;width:168px;height:16px;"></div>
<span class="t" style="left:29.5px;top:642px;font-size:11px;line-height:12px;color:#1c1c1c;transform:scaleX(1.034);">Servizio</span>
<div class="b inp" style="left:82px;top:642px;width:88px;height:16px;"></div>
<div class="b btn" style="left:173px;top:642px;width:18px;height:17px;"></div>
<svg class="i" style="left:176.5px;top:645px;" width="11" height="11" viewBox="0 0 11 11"><circle cx="6.9" cy="4.2" r="2.7" fill="#f1f7fd" stroke="#7db6e6" stroke-width="1.5"/><path d="M4.8 6.4 L1.8 9.4" stroke="#7db6e6" stroke-width="1.9" stroke-linecap="round"/></svg>
<div class="b inp" style="left:198px;top:644px;width:141px;height:16px;"></div>
<span class="t" style="left:362.0px;top:633px;font-size:11px;line-height:12px;color:#1c1c1c;transform:scaleX(1.073);">Destinatario</span>
<div class="b inp" style="left:436px;top:633px;width:52px;height:16px;"></div>
<div class="b inp" style="left:494px;top:633px;width:169px;height:16px;"></div>
<div class="b phead" style="left:15px;top:664px;width:673px;height:24px;border-radius:4px 4px 0 0"></div>
<svg class="i" style="left:16.5px;top:665px;" width="670" height="21" viewBox="0 0 670 21"><path d="M0 0 H670 V10.5 C520 12 300 13 0 13.5 Z" fill="#89b6dc"/></svg>
<span class="t" style="left:19.0px;top:669px;font-size:11px;line-height:12px;font-weight:bold;color:#fff;transform:scaleX(0.958);">Destinazione:</span>
<svg class="i" style="left:672px;top:670px;" width="11" height="11" viewBox="0 0 11 11"><circle cx="5.5" cy="5.5" r="5.5" fill="#f5f9fd"/><path d="M2.6 6.4 L5.5 3.2 L8.4 6.4 Z" fill="#6aa6da"/><path d="M3.2 8 H7.8" stroke="#dbe9f6" stroke-width="1"/></svg>
<div class="b" style="left:15px;top:687px;width:673px;height:12px;background:#e7f2fc;border-left:1px solid #a6c9e2;border-right:1px solid #a6c9e2"></div>
<div class="b" style="left:449px;top:687px;width:2px;height:12px;background:#c5dbec"></div>
<div class="b" style="left:482px;top:687px;width:1px;height:12px;background:#c5dbec"></div>
<div class="b" style="left:521px;top:687px;width:1px;height:12px;background:#c5dbec"></div>
<div class="b" style="left:576px;top:687px;width:2px;height:12px;background:#c5dbec"></div>
<div class="b" style="left:649px;top:687px;width:2px;height:12px;background:#c5dbec"></div>
<span class="t" style="left:199.5px;top:691px;font-size:11px;line-height:12px;font-weight:bold;color:#2e6e9e;transform:scaleX(0.956);">Descrizione</span>
<span class="t" style="left:450.5px;top:691px;font-size:11px;line-height:12px;font-weight:bold;color:#2e6e9e;transform:scaleX(0.901);">Gest</span>
<span class="t" style="left:488.0px;top:691px;font-size:11px;line-height:12px;font-weight:bold;color:#2e6e9e;transform:scaleX(0.872);">Resp</span>
<span class="t" style="left:525.5px;top:691px;font-size:11px;line-height:12px;font-weight:bold;color:#2e6e9e;transform:scaleX(0.955);">Originale</span>
<span class="t" style="left:591.5px;top:691px;font-size:11px;line-height:12px;font-weight:bold;color:#2e6e9e;transform:scaleX(0.976);">Termine</span>
<span class="t" style="left:654.0px;top:691px;font-size:11px;line-height:12px;font-weight:bold;color:#2e6e9e;transform:scaleX(1.018);">Stato</span>
<div class="b" style="left:1px;top:699px;width:1165px;height:1px;background:#b4b4b4"></div>
<svg class="i" style="left:0px;top:0px;" width="200" height="400" viewBox="0 0 200 400"><path d="M5 321.5 C5 308.9 41.5 299 88 299 C142 299 175 311.6 175 320 C175 328.8 144 342 94 342 C44 342 5 333 5 321.5 Z" fill="none" stroke="#f07c28" stroke-width="6" stroke-linejoin="round"/></svg>
<svg class="i" style="left:0px;top:470px;" width="200" height="100" viewBox="0 0 200 100"><ellipse cx="88" cy="49" rx="74.4" ry="36" fill="none" stroke="#1e9ad8" stroke-width="5.6" transform="rotate(-3 88 49)"/></svg>
<!-- scrollbar, splitter, right action panel -->
<div class="b" style="left:1166px;top:207px;width:17px;height:493px;background:#f1f1f1;border-left:1px solid #e6e6e6;border-right:1px solid #d9d9d9"></div>
<svg class="i" style="left:1171px;top:215px;" width="7" height="4.5" viewBox="0 0 7 4.5"><path d="M0 4.5 H7 L3.5 0 Z" fill="#3a3a3a"/></svg>
<div class="b" style="left:1166px;top:226px;width:15px;height:298px;border:1px solid #979797;border-radius:2px;background:linear-gradient(90deg,#f7f7f7 0,#ececec 45%,#d9d9d9 55%,#cdcdd0 100%)"></div>
<svg class="i" style="left:1170px;top:370px;" width="8" height="8" viewBox="0 0 8 8"><path d="M0 .5 H8 M0 3 H8 M0 5.5 H8 M0 8 H8" stroke="#5a5a5a" stroke-width="1"/></svg>
<svg class="i" style="left:1171px;top:689px;" width="7" height="4.5" viewBox="0 0 7 4.5"><path d="M0 0 H7 L3.5 4.5 Z" fill="#3a3a3a"/></svg>
<div class="b" style="left:1182px;top:207px;width:7px;height:493px;background:#e1e1e1"></div>
<div class="b" style="left:1182px;top:431px;width:7px;height:45px;background:#b4b4b4"></div>
<div class="b" style="left:1189px;top:207px;width:170px;height:493px;background:#fff;border:1px solid #bdbdbd;border-radius:5px"></div>
<div class="b" style="left:1359px;top:207px;width:7px;height:493px;background:#f0f0f0"></div>
<div class="b hl" style="left:1200px;top:219px;width:150px;height:19px;"></div>
<span class="t" style="left:1248.0px;top:220px;font-size:14.6px;line-height:16px;font-weight:bold;color:#d6150d;transform:scaleX(0.924);">ARRIVO</span>
<div class="b btn" style="left:1200px;top:241px;width:91px;height:20px;"></div>
<svg class="i" style="left:1208.5px;top:246.15px;" width="10" height="10" viewBox="0 0 10 10"><path d="M1.2 1.2 H5.4 L7.8 3.4 V8.6 H1.2 Z" fill="#e9f3fc" stroke="#8cbce6" stroke-width="1.2" stroke-linejoin="round"/><path d="M5 1.4 V3.8 H7.6" fill="none" stroke="#8cbce6" stroke-width="1"/></svg>
<span class="t" style="left:1224.7px;top:245px;font-size:11px;line-height:12px;font-weight:bold;color:#2e6e9e;transform:scaleX(1.025);">F2 - Nuovo</span>
<div class="b btn" style="left:1200px;top:265px;width:102px;height:20px;"></div>
<svg class="i" style="left:1208.5px;top:270.15px;" width="10" height="10" viewBox="0 0 10 10"><rect x="1.2" y="1.2" width="8" height="7.8" rx="1.2" fill="#6aa8e0"/><rect x="2.2" y="2.2" width="6" height="1.6" fill="#a9cff0"/><rect x="5.4" y="6" width="2.6" height="3" fill="#e4f0fb"/><rect x="2.4" y="6" width="2.2" height="3" fill="#8dbfea"/></svg>
<span class="t" style="left:1224.7px;top:268px;font-size:11px;line-height:12px;font-weight:bold;color:#2e6e9e;transform:scaleX(1.032);">F5 - Registra</span>
<div class="b btn" style="left:1200px;top:344px;width:103px;height:20px;"></div>
<svg class="i" style="left:1208.5px;top:349.4px;" width="10" height="10" viewBox="0 0 10 10"><rect x="1.2" y="1.2" width="5" height="5.6" rx="1.2" fill="#e9f3fc" stroke="#7db6e6" stroke-width="1.1"/><rect x="3.6" y="3.6" width="5.2" height="5.6" rx="1.2" fill="#cfe4f8" stroke="#7db6e6" stroke-width="1.1"/></svg>
<span class="t" style="left:1224.7px;top:348px;font-size:11px;line-height:12px;font-weight:bold;color:#2e6e9e;transform:scaleX(1.040);">Duplica Prot.</span>
<div class="b btn" style="left:1200px;top:466px;width:130px;height:19px;"></div>
<svg class="i" style="left:1208.5px;top:470.85px;" width="10" height="10" viewBox="0 0 10 10"><path d="M1.8 1.6 V9" stroke="#7db6e6" stroke-width="1.2"/><path d="M3 1.8 C4.4 1.2 5.8 2.8 8.6 1.8 V6 C5.8 7 4.4 5.4 3 6 Z" fill="#7db6e6"/></svg>
<span class="t" style="left:1224.7px;top:469px;font-size:11px;line-height:12px;font-weight:bold;color:#2e6e9e;transform:scaleX(1.062);">Metti in Riservato</span>
<div class="b btn" style="left:1200px;top:601px;width:101px;height:20px;"></div>
<svg class="i" style="left:1208.5px;top:606.55px;" width="10" height="10" viewBox="0 0 10 10"><path d="M5 9 V2.8 M2.6 4.9 L5 2 L7.4 4.9" stroke="#7db6e6" stroke-width="1.5" fill="none"/></svg>
<span class="t" style="left:1224.7px;top:604px;font-size:11px;line-height:12px;font-weight:bold;color:#2e6e9e;transform:scaleX(1.051);">Vai Partenza</span>
<!-- find bar -->
<div class="b findbar" style="left:0px;top:700px;width:1366px;height:28px;"></div>
<svg class="i" style="left:8.5px;top:711px;" width="8" height="8" viewBox="0 0 8 8"><path d="M1 1 L7 7 M7 1 L1 7" stroke="#444a52" stroke-width="1.7" fill="none"/></svg>
<span class="t" style="left:33.0px;top:708px;font-size:12px;line-height:14px;transform:scaleX(0.938);">Trova:</span>
<div class="b" style="left:74px;top:704px;width:119px;height:21px;background:#fff;border:1px solid #e3e9f1;border-top-color:#c9d2de"></div>
<span class="t" style="left:79.5px;top:708px;font-size:12px;line-height:14px;transform:scaleX(0.996);">mariaro</span>
<svg class="i" style="left:203px;top:708px;" width="13" height="14" viewBox="0 0 13 14"><defs><linearGradient id="fa1" x1="0" y1="0" x2="1" y2="1"><stop offset="0" stop-color="#4a97ec"/><stop offset="1" stop-color="#174fbb"/></linearGradient></defs><path d="M4 .5 H9 V6.4 H12.6 L6.5 13.2 L.4 6.4 H4 Z" fill="url(#fa1)"/></svg>
<span class="t" style="left:222.0px;top:708px;font-size:12px;line-height:14px;transform:scaleX(0.931);">S<u>u</u>ccessivo</span>
<svg class="i" style="left:287px;top:708.6px;" width="13" height="14" viewBox="0 0 13 14"><path d="M4 13.4 H9 V7.4 H12.6 L6.5 .6 L.4 7.4 H4 Z" fill="url(#fa1)"/></svg>
<span class="t" style="left:306.0px;top:708px;font-size:12px;line-height:14px;transform:scaleX(0.962);"><u>P</u>recedente</span>
<svg class="i" style="left:371px;top:707px;" width="15" height="15" viewBox="0 0 15 15"><path d="M7.4 2.6 L11.2 .8 L14.2 4.4 L8.6 10.2 L5.2 7.6 Z" fill="#fbfbfb" stroke="#4a4a4a" stroke-width="1"/><path d="M5.2 7.6 L8.6 10.2 L6.4 12.4 L3.4 10.4 Z" fill="#3a3a3a"/><path d="M3.4 10.6 L5.6 12.4 L2 14.2 L.8 13.2 Z" fill="#f0b41c"/></svg>
<span class="t" style="left:392.0px;top:708px;font-size:12px;line-height:14px;transform:scaleX(0.922);">Eviden<u>z</u>ia</span>
<div class="b" style="left:452px;top:709px;width:13px;height:13px;background:linear-gradient(135deg,#dcdcdc,#fdfdfd);border:1px solid #8e8f8f;box-shadow:inset 0 0 0 1px #f4f4f4"></div>
<span class="t" style="left:471.5px;top:708px;font-size:12px;line-height:14px;transform:scaleX(1.019);"><u>M</u>aiuscole/minuscole</span>
<!-- windows taskbar sliver -->
<div class="b taskbar" style="left:0px;top:728px;width:1366px;height:8px;border-top:1px solid #47546a"></div>
<div class="b" style="left:13px;top:730px;width:29px;height:29px;border-radius:50%;background:radial-gradient(circle at 50% 30%,#c6d6ea,#6f8db3);border:1px solid #dfe8f3;box-shadow:0 0 0 1px #3d4a5e"></div>
<div class="b" style="left:59px;top:729px;width:55px;height:11px;background:linear-gradient(#cfd5de,#bcc4d0);border:1px solid #2f3948;border-radius:3px 3px 0 0;box-shadow:inset 0 0 0 1px rgba(255,255,255,.6)"></div>
<div class="b" style="left:120px;top:729px;width:60px;height:11px;background:linear-gradient(#cfd5de,#bcc4d0);border:1px solid #2f3948;border-radius:3px 3px 0 0;box-shadow:inset 0 0 0 1px rgba(255,255,255,.6)"></div>
<div class="b" style="left:182px;top:729px;width:53px;height:11px;background:linear-gradient(#cfd5de,#bcc4d0);border:1px solid #2f3948;border-radius:3px 3px 0 0;box-shadow:inset 0 0 0 1px rgba(255,255,255,.6)"></div>
<div class="b" style="left:244px;top:729px;width:60px;height:11px;background:linear-gradient(#eef0f4,#dcdfe6);border:1px solid #2f3948;border-radius:3px 3px 0 0;box-shadow:inset 0 0 0 1px rgba(255,255,255,.6)"></div>
<div class="b" style="left:555px;top:729px;width:58px;height:11px;background:linear-gradient(#eef0f4,#dcdfe6);border:1px solid #2f3948;border-radius:3px 3px 0 0;box-shadow:inset 0 0 0 1px rgba(255,255,255,.6)"></div>
<div class="b" style="left:617px;top:729px;width:54px;height:11px;background:linear-gradient(#eef0f4,#dcdfe6);border:1px solid #2f3948;border-radius:3px 3px 0 0;box-shadow:inset 0 0 0 1px rgba(255,255,255,.6)"></div>
<div class="b" style="left:679px;top:729px;width:54px;height:11px;background:linear-gradient(#cfd5de,#bcc4d0);border:1px solid #2f3948;border-radius:3px 3px 0 0;box-shadow:inset 0 0 0 1px rgba(255,255,255,.6)"></div>
<div class="b" style="left:740px;top:729px;width:55px;height:11px;background:linear-gradient(#cfd5de,#bcc4d0);border:1px solid #2f3948;border-radius:3px 3px 0 0;box-shadow:inset 0 0 0 1px rgba(255,255,255,.6)"></div>
<div class="b" style="left:802px;top:729px;width:60px;height:11px;background:linear-gradient(#cfd5de,#bcc4d0);border:1px solid #2f3948;border-radius:3px 3px 0 0;box-shadow:inset 0 0 0 1px rgba(255,255,255,.6)"></div>
<div class="b" style="left:865px;top:729px;width:55px;height:11px;background:linear-gradient(#cfd5de,#bcc4d0);border:1px solid #2f3948;border-radius:3px 3px 0 0;box-shadow:inset 0 0 0 1px rgba(255,255,255,.6)"></div>
<div class="b" style="left:80px;top:733px;width:20px;height:12px;background:#f2c63e;border-radius:50%"></div>
<div class="b" style="left:143px;top:733px;width:20px;height:12px;background:#3f8fd6;border-radius:50%"></div>
<div class="b" style="left:197px;top:734px;width:21px;height:6px;background:#d8b465"></div>
<div class="b" style="left:262px;top:731px;width:26px;height:19px;background:#7db7e8;border-radius:50%;border:2px solid #e9f1fa"></div>
<svg class="i" style="left:323px;top:732px;" width="24" height="6" viewBox="0 0 24 6"><path d="M0 6 L12 0 L24 6 Z" fill="#232e4a"/><path d="M3 6 L12 1.6 L21 6 Z" fill="#8d9bb2"/></svg>
<div class="b" style="left:452px;top:732px;width:16px;height:14px;background:#df5a3c;border-radius:50%"></div>
<div class="b" style="left:508px;top:732px;width:29px;height:8px;background:#f49a1f;border-radius:4px 4px 0 0"></div>
<div class="b" style="left:571px;top:732px;width:23px;height:16px;background:#1ea3ea;border-radius:50%"></div>
<div class="b" style="left:627px;top:731px;width:31px;height:9px;background:#fdfdfd;border-radius:5px 5px 0 0"></div>
<div class="b" style="left:692px;top:732px;width:24px;height:8px;border:1px solid #6a7484;border-radius:3px 0 0 0;background:#dfe4ea"></div>
<div class="b" style="left:760px;top:733px;width:20px;height:7px;background:#8d9094;border-radius:2px"></div>
<div class="b" style="left:838px;top:733px;width:18px;height:13px;background:#eaa253;border-radius:50%"></div>
<div class="b" style="left:877px;top:731px;width:27px;height:9px;background:#fff;border-top:2px solid #b3151b"></div>
<div class="b" style="left:1352px;top:729px;width:14px;height:7px;background:linear-gradient(90deg,#a3abb8,#727c8d);border-left:1px solid #3d485a;box-shadow:inset 1px 1px 0 #c3cad5"></div>
</div>
</body>
</html>
